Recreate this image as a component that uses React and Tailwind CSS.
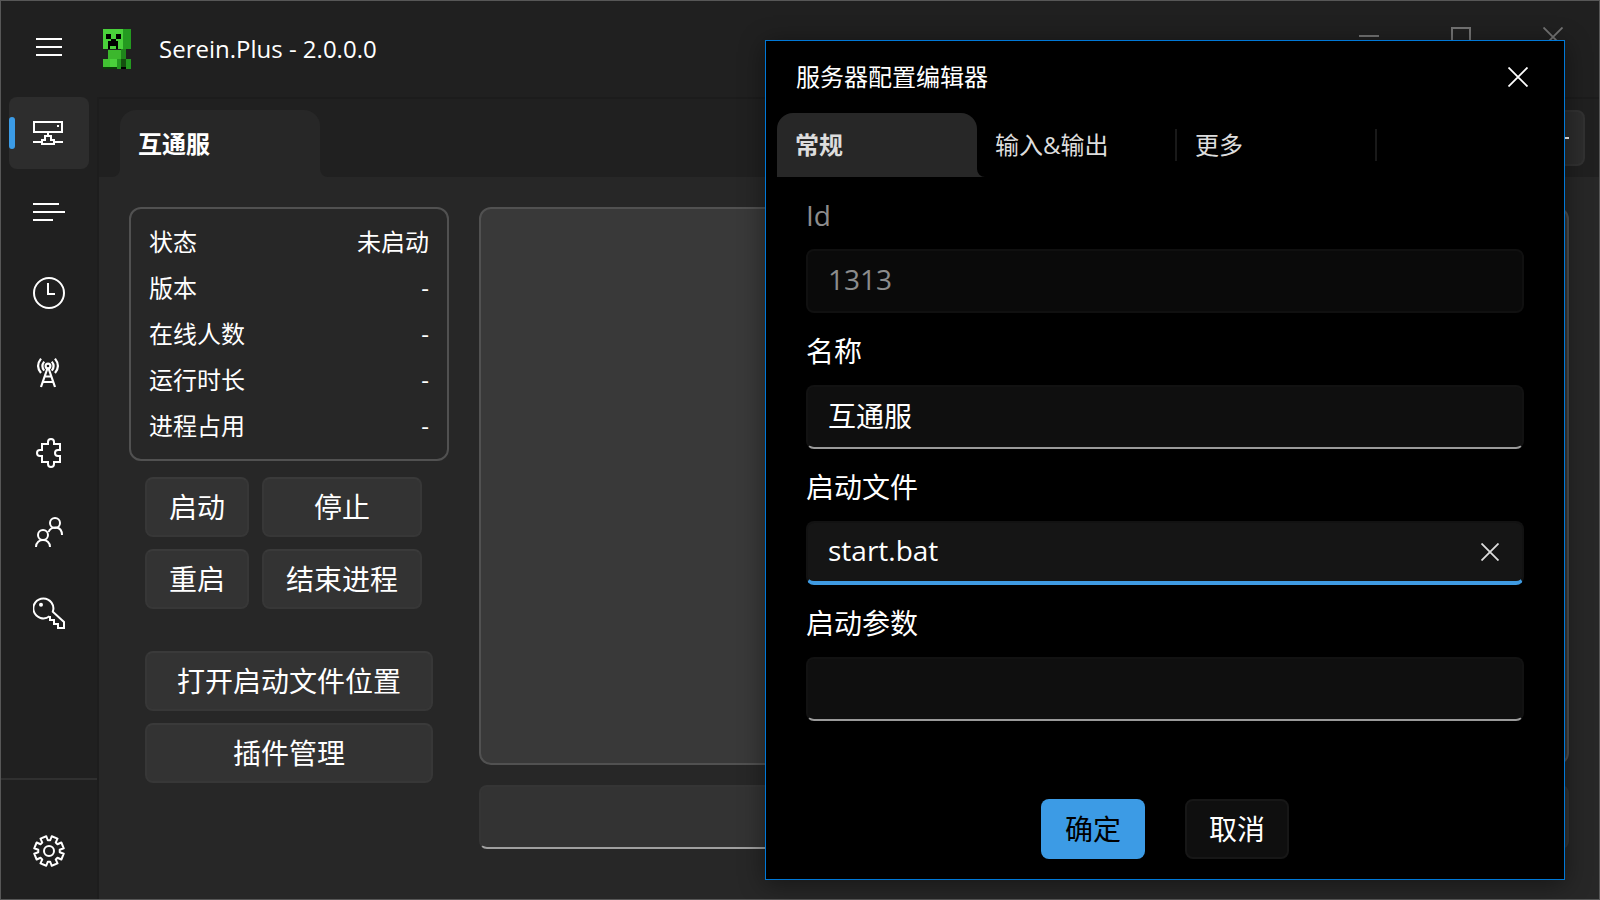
import React from "react";

const line = { fill: "none", stroke: "currentColor", strokeWidth: 2 };

function Icon({ children, size = 32 }) {
  return (
    <svg width={size} height={size} viewBox={`0 0 ${size} ${size}`} aria-hidden="true" {...line}>
      {children}
    </svg>
  );
}

const ServerIcon = () => (
  <Icon>
    <path d="M1 5H29V15H1Z M15 16V20 M0 25H9 M21 25H30 M9 23V27H21V23H18V19H12V23Z" />
    <path d="M24 8h2v2h-2z" fill="currentColor" stroke="none" />
  </Icon>
);
const LinesIcon = () => (
  <Icon>
    <path d="M0 7H26 M0 15H32 M0 23H20" />
  </Icon>
);
const ClockIcon = () => (
  <Icon>
    <circle cx="16" cy="16" r="15" />
    <path d="M15 6V17H22" />
  </Icon>
);
const TowerIcon = () => (
  <Icon>
    <g strokeWidth="2.200">
      <circle cx="15" cy="9" r="2.400" />
      <path d="M14.400 11.500L8 30 M15.600 11.500L22 30 M12 19.500H18 M10.200 25H19.800" />
      <path d="M11.200 4.600Q7.600 9 11.200 13.600 M18.800 4.600Q22.400 9 18.800 13.600 M8 1.600Q2.200 9 8 16 M22 1.600Q27.800 9 22 16" />
    </g>
  </Icon>
);
const PuzzleIcon = () => (
  <Icon>
    <path d="M9 7H15V5a3 3 0 0 1 6 0V7H27V13H25a3 3 0 0 0 0 6H27V25H21V27a3 3 0 0 1-6 0V25H9V19H7a3 3 0 0 1 0-6H9Z" />
  </Icon>
);
const PeopleIcon = () => (
  <Icon>
    <circle cx="22" cy="6" r="5" />
    <circle cx="10" cy="18" r="5" />
    <path d="M29 18C29 8.500 18 8.500 15.500 15 M3 30C3 20.700 17 20.700 17 30" />
  </Icon>
);
const KeyIcon = () => (
  <Icon>
    <path d="M16.500 19.300A10 10 0 1 1 19.800 14.700L31 25V31H25V27H21V23H17V19" />
    <circle cx="8" cy="7.700" r="2" fill="currentColor" stroke="none" />
  </Icon>
);

const gearPoints = Array.from({ length: 8 }, (_, i) => {
  const mid = 22.5 + i * 45;
  return [
    [mid - 16, 10.8],
    [mid - 12, 15],
    [mid + 12, 15],
    [mid + 16, 10.8],
  ]
    .map(([deg, r]) => {
      const a = (deg * Math.PI) / 180;
      return `${(16 + r * Math.sin(a)).toFixed(2)},${(16 - r * Math.cos(a)).toFixed(2)}`;
    })
    .join(" ");
}).join(" ");

const GearIcon = () => (
  <Icon>
    <polygon points={gearPoints} strokeLinejoin="round" />
    <circle cx="16" cy="16" r="5" />
  </Icon>
);
const CrossIcon = ({ size = 20 }) => (
  <Icon size={size}>
    <path d={`M0.500 0.500L${size - 0.5} ${size - 0.5} M${size - 0.5} 0.500L0.500 ${size - 0.5}`} strokeWidth="1.800" />
  </Icon>
);

function Creeper() {
  return (
    <svg width="28" height="40" viewBox="0 0 28 40" shapeRendering="crispEdges" aria-hidden="true">
      <path d="M0 0h20v20H0z" fill="#4ad13b" />
      <path d="M20 0h8v20h-8z" fill="#249a20" />
      <path d="M3 5h5v5H3z M13 5h5v5h-5z M8 10h5v2h2v8h-2v-3H7v3H5v-8h3z" fill="#000" />
      <path d="M5 21h13v9H5z" fill="#3cb72d" />
      <path d="M18 20h5v10h-5z" fill="#1f851b" />
      <path d="M0 30h7v8H0z" fill="#41c332" />
      <path d="M7 30h7v8H7z" fill="#4ad13b" />
      <path d="M14 30h4v10h-4z M23 30h5v10h-5z" fill="#249a20" />
      <path d="M18 30h5v8h-5z" fill="#14500f" />
      <path d="M0 38h14v2H0z" fill="#0a3d08" />
      <path d="M18 38h5v2h-5z" fill="#000" />
    </svg>
  );
}

const navItems = [
  ["服务器", ServerIcon],
  ["匹配", LinesIcon],
  ["定时任务", ClockIcon],
  ["连接", TowerIcon],
  ["插件", PuzzleIcon],
  ["成员", PeopleIcon],
  ["权限", KeyIcon],
];

function NavButton({ label, active, children }) {
  return (
    <button
      type="button"
      aria-label={label}
      className={`relative flex h-[72px] w-20 items-center justify-center rounded-lg text-white ${active ? "bg-[#2d2d2d]" : ""}`}
    >
      {active && <span className="absolute left-0 top-5 h-8 w-1.5 rounded-full bg-[#3b9be6]" />}
      {children}
    </button>
  );
}

function TabFoot({ side }) {
  return (
    <svg
      width="8"
      height="8"
      viewBox="0 0 8 8"
      aria-hidden="true"
      className={side === "left" ? "absolute bottom-0 right-full" : "absolute bottom-0 left-full"}
    >
      <path d={side === "left" ? "M8 0V8H0A8 8 0 0 0 8 0Z" : "M0 0V8H8A8 8 0 0 1 0 0Z"} fill="#272727" />
    </svg>
  );
}

const stats = [
  ["状态", "未启动"],
  ["版本", "-"],
  ["在线人数", "-"],
  ["运行时长", "-"],
  ["进程占用", "-"],
];

function PanelButton({ children }) {
  return (
    <button
      type="button"
      className="h-[60px] rounded-lg border-2 border-[#373737] border-t-[#3a3a3a] bg-[#333333] text-[28px] leading-10 text-white"
    >
      {children}
    </button>
  );
}

function Field({ id, label, value, state }) {
  const box = {
    normal: "border-[#121212] border-b-[#9a9a9a] bg-[#0f0f0f] text-white",
    focused: "border-[#121212] border-b-4 border-b-[#3f9be2] bg-[#151515] text-white",
    disabled: "border-[#101010] bg-[#0a0a0a] text-[#8c8c8c]",
  }[state];
  return (
    <div className="flex flex-col">
      <label
        htmlFor={id}
        className={`mb-3.5 mt-[18px] text-[28px] leading-10 ${state === "disabled" ? "text-[#8c8c8c]" : "text-white"}`}
      >
        {label}
      </label>
      <div className={`flex h-16 items-center rounded-lg border-2 ${box}`}>
        <input
          id={id}
          type="text"
          defaultValue={value}
          disabled={state === "disabled"}
          className="h-full min-w-0 flex-1 bg-transparent px-5 pb-1 text-[28px] leading-10 outline-none"
        />
        {state === "focused" && (
          <button type="button" aria-label="清除" className="flex h-12 w-16 items-center justify-center text-[#dddddd]">
            <CrossIcon size={18} />
          </button>
        )}
      </div>
    </div>
  );
}

function ConfigDialog() {
  return (
    <section
      role="dialog"
      aria-labelledby="dialog-title"
      className="absolute bottom-[19px] right-[34px] top-[39px] flex w-[800px] flex-col border border-[#0078d7] bg-black shadow-[0_4px_24px_rgba(0,0,0,0.45)]"
    >
      <header className="flex h-[72px] items-center justify-between pl-[30px] pr-1">
        <h2 id="dialog-title" className="text-2xl text-white">
          服务器配置编辑器
        </h2>
        <button type="button" aria-label="关闭" className="flex h-[72px] w-[84px] items-center justify-center text-white">
          <CrossIcon />
        </button>
      </header>
      <div role="tablist" className="flex h-16 px-[11px] text-2xl text-[#dddddd]">
        <button
          type="button"
          role="tab"
          aria-selected="true"
          className="relative w-[200px] rounded-t-2xl bg-[#272727] pl-[18px] text-left font-bold"
        >
          常规
          <TabFoot side="right" />
        </button>
        {["输入&输出", "更多"].map((name) => (
          <button key={name} type="button" role="tab" aria-selected="false" className="flex w-[200px] items-center justify-between pl-[18px]">
            {name}
            <span className="h-8 w-0.5 bg-[#191919]" />
          </button>
        ))}
      </div>
      <form className="flex flex-1 flex-col px-10">
        <Field id="server-id" label="Id" value="1313" state="disabled" />
        <Field id="server-name" label="名称" value="互通服" state="normal" />
        <Field id="server-file" label="启动文件" value="start.bat" state="focused" />
        <Field id="server-args" label="启动参数" value="" state="normal" />
        <div className="mb-5 mt-auto flex justify-center gap-10 text-[28px] leading-10">
          <button type="button" className="h-[60px] w-[104px] rounded-lg bg-[#3c9be5] text-black">
            确定
          </button>
          <button type="button" className="h-[60px] w-[104px] rounded-lg border-2 border-[#171717] bg-[#0f0f0f] text-white">
            取消
          </button>
        </div>
      </form>
    </section>
  );
}

export default function App() {
  return (
    <div className="relative flex min-h-screen flex-col border border-[#575757] bg-[#202020] font-['Open_Sans','Noto_Sans_CJK_SC',sans-serif] text-white">
      <header className="flex h-24 items-start pl-2">
        <button type="button" aria-label="菜单" className="flex h-[92px] w-20 items-center justify-center">
          <svg width="26" height="18" viewBox="0 0 26 18" aria-hidden="true" {...line}>
            <path d="M0 1H26 M0 9H26 M0 17H26" />
          </svg>
        </button>
        <div className="flex h-24 flex-1 items-center gap-7 pl-3.5">
          <Creeper />
          <h1 className="text-2xl">Serein.Plus - 2.0.0.0</h1>
        </div>
        <div className="flex text-[#747474]">
          <button type="button" aria-label="最小化" className="flex h-[72px] w-[92px] items-center justify-center">
            <svg width="20" height="20" viewBox="0 0 20 20" aria-hidden="true" {...line}>
              <path d="M0 9H20" />
            </svg>
          </button>
          <button type="button" aria-label="最大化" className="flex h-[72px] w-[92px] items-center justify-center">
            <svg width="20" height="20" viewBox="0 0 20 20" aria-hidden="true" {...line}>
              <path d="M1 1H19V19H1Z" />
            </svg>
          </button>
          <button type="button" aria-label="关闭窗口" className="flex h-[72px] w-[92px] items-center justify-center">
            <CrossIcon />
          </button>
        </div>
      </header>

      <div className="flex flex-1">
        <nav className="flex w-24 flex-col">
          <div className="flex flex-1 flex-col gap-2 pl-2">
            {navItems.map(([label, Glyph], i) => (
              <NavButton key={label} label={label} active={i === 0}>
                <Glyph />
              </NavButton>
            ))}
          </div>
          <div className="border-t-2 border-[#303030] pb-3 pl-2 pt-[35px]">
            <NavButton label="设置">
              <GearIcon />
            </NavButton>
          </div>
        </nav>

        <main className="flex min-w-0 flex-1 flex-col border-l-2 border-[#1d1d1d]">
          <div className="flex h-20 items-end justify-between border-t-2 border-[#1c1c1c] pr-3.5">
            <div role="tablist" className="flex pl-[21px]">
              <button
                type="button"
                role="tab"
                aria-selected="true"
                className="relative h-[67px] w-[200px] rounded-t-2xl bg-[#272727] pl-[18px] text-left text-2xl font-bold"
              >
                互通服
                <TabFoot side="left" />
                <TabFoot side="right" />
              </button>
            </div>
            <button
              type="button"
              aria-label="添加服务器"
              className="mb-[11px] flex h-14 w-[50px] items-center justify-center rounded-lg border-2 border-[#323232] bg-[#2d2d2d]"
            >
              <svg width="18" height="18" viewBox="0 0 18 18" aria-hidden="true" {...line}>
                <path d="M0 9H18 M9 0V18" />
              </svg>
            </button>
          </div>

          <div className="flex flex-1 gap-[30px] bg-[#272727] px-[30px] pb-[50px] pt-[30px]">
            <div className="w-80">
              <dl className="rounded-xl border-2 border-[#515151] px-[18px] py-2.5 text-2xl leading-[46px]">
                {stats.map(([name, value]) => (
                  <div key={name} className="flex h-[46px] justify-between">
                    <dt>{name}</dt>
                    <dd>{value}</dd>
                  </div>
                ))}
              </dl>
              <div className="mt-4 grid grid-cols-[104px_160px] gap-x-[13px] gap-y-3 pl-4">
                <PanelButton>启动</PanelButton>
                <PanelButton>停止</PanelButton>
                <PanelButton>重启</PanelButton>
                <PanelButton>结束进程</PanelButton>
              </div>
              <div className="mt-[42px] flex flex-col gap-3 px-4">
                <PanelButton>打开启动文件位置</PanelButton>
                <PanelButton>插件管理</PanelButton>
              </div>
            </div>
            <div className="flex min-w-0 flex-1 flex-col gap-5">
              <div role="log" aria-label="控制台" className="flex-1 rounded-xl border-2 border-[#515151] bg-[#393939]" />
              <div className="flex h-16 gap-3">
                <input
                  type="text"
                  aria-label="命令"
                  className="min-w-0 flex-1 rounded-lg border-2 border-[#353535] border-b-[#a0a0a0] bg-[#333333] px-5 text-[28px] outline-none"
                />
                <button
                  type="button"
                  aria-label="发送"
                  className="w-16 rounded-lg border-2 border-[#353535] bg-[#333333]"
                />
              </div>
            </div>
          </div>
        </main>
      </div>

      <ConfigDialog />
    </div>
  );
}
